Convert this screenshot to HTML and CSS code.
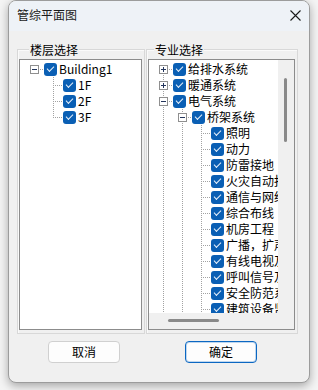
FILE: index.html
```html
<!DOCTYPE html>
<html lang="zh-CN">
<head>
<meta charset="utf-8">
<title>管综平面图</title>
<link rel="stylesheet" href="styles.css">
</head>
<body>
<div class="window">
  <div class="titlebar">
    <span class="title">管综平面图</span>
    <svg class="close" width="11" height="11" viewBox="0 0 11 11"><path d="M0.5 0.5 L10.5 10.5 M10.5 0.5 L0.5 10.5" stroke="#1a1a1a" stroke-width="1.1" fill="none"/></svg>
  </div>
  <div class="content">
    <div class="groups">
      <div class="group group-floor">
        <div class="legend">楼层选择</div>
        <div class="tree">
          <div class="rows">
            <div class="row"><span class="cell lone"><i class="exp"></i></span><span class="cb"></span><span class="label">Building1</span></div>
            <div class="row"><span class="cell"></span><span class="cell tee"></span><span class="cb"></span><span class="label">1F</span></div>
            <div class="row"><span class="cell"></span><span class="cell tee"></span><span class="cb"></span><span class="label">2F</span></div>
            <div class="row"><span class="cell"></span><span class="cell elbow"></span><span class="cb"></span><span class="label">3F</span></div>
          </div>
        </div>
      </div>
      <div class="group group-spec">
        <div class="legend">专业选择</div>
        <div class="tree tree-scroll">
          <div class="rows">
            <div class="row"><span class="cell first"><i class="exp plus"></i></span><span class="cb"></span><span class="label">给排水系统</span></div>
            <div class="row"><span class="cell tee"><i class="exp plus"></i></span><span class="cb"></span><span class="label">暖通系统</span></div>
            <div class="row"><span class="cell tee"><i class="exp"></i></span><span class="cb"></span><span class="label">电气系统</span></div>
            <div class="row"><span class="cell pipe"></span><span class="cell tee"><i class="exp"></i></span><span class="cb"></span><span class="label">桥架系统</span></div>
            <div class="row"><span class="cell pipe"></span><span class="cell pipe"></span><span class="cell tee"></span><span class="cb"></span><span class="label">照明</span></div>
            <div class="row"><span class="cell pipe"></span><span class="cell pipe"></span><span class="cell tee"></span><span class="cb"></span><span class="label">动力</span></div>
            <div class="row"><span class="cell pipe"></span><span class="cell pipe"></span><span class="cell tee"></span><span class="cb"></span><span class="label">防雷接地</span></div>
            <div class="row"><span class="cell pipe"></span><span class="cell pipe"></span><span class="cell tee"></span><span class="cb"></span><span class="label">火灾自动报警系统</span></div>
            <div class="row"><span class="cell pipe"></span><span class="cell pipe"></span><span class="cell tee"></span><span class="cb"></span><span class="label">通信与网络系统</span></div>
            <div class="row"><span class="cell pipe"></span><span class="cell pipe"></span><span class="cell tee"></span><span class="cb"></span><span class="label">综合布线</span></div>
            <div class="row"><span class="cell pipe"></span><span class="cell pipe"></span><span class="cell tee"></span><span class="cb"></span><span class="label">机房工程</span></div>
            <div class="row"><span class="cell pipe"></span><span class="cell pipe"></span><span class="cell tee"></span><span class="cb"></span><span class="label">广播，扩声与会议系统</span></div>
            <div class="row"><span class="cell pipe"></span><span class="cell pipe"></span><span class="cell tee"></span><span class="cb"></span><span class="label">有线电视及卫星电视接收系统</span></div>
            <div class="row"><span class="cell pipe"></span><span class="cell pipe"></span><span class="cell tee"></span><span class="cb"></span><span class="label">呼叫信号及公共信息显示系统</span></div>
            <div class="row"><span class="cell pipe"></span><span class="cell pipe"></span><span class="cell tee"></span><span class="cb"></span><span class="label">安全防范系统</span></div>
            <div class="row"><span class="cell pipe"></span><span class="cell pipe"></span><span class="cell tee"></span><span class="cb"></span><span class="label">建筑设备监控系统</span></div>
            <div class="row"><span class="cell pipe"></span><span class="cell pipe"></span><span class="cell tee"></span><span class="cb"></span><span class="label">应急照明</span></div>
          </div>
          <div class="vscroll"><div class="vthumb"></div></div>
          <div class="hscroll"><div class="hthumb"></div></div>
          <div class="corner"></div>
        </div>
      </div>
    </div>
    <div class="buttons">
      <button class="btn">取消</button>
      <button class="btn btn-primary">确定</button>
    </div>
  </div>
</div>
</body>
</html>
```

FILE: styles.css
```css
* { box-sizing: border-box; }

html, body {
  margin: 0;
  padding: 0;
  background: #f4f4f4;
  width: 318px;
  height: 390px;
  overflow: hidden;
  font-family: "Noto Sans CJK SC", "Microsoft YaHei", sans-serif;
  font-size: 12px;
  color: #000;
}

.window {
  margin-left: 8px;
  width: 302px;
  height: 383px;
  border: 1px solid #9c9c9c;
  border-radius: 8px;
  background: #f0f0f0;
  overflow: hidden;
  display: flex;
  flex-direction: column;
  box-shadow: 0 3px 10px rgba(0, 0, 0, 0.32);
}

.titlebar {
  height: 30px;
  flex: none;
  background: #eef2f7;
  display: flex;
  align-items: center;
  justify-content: space-between;
  padding: 0 8px 2px 8px;
}

.title {
  font-size: 12px;
  line-height: 16px;
  color: #1a1a1a;
}

.close { display: block; }

.content {
  flex: 1;
  padding: 18px 0 0 8px;
  display: flex;
  flex-direction: column;
}

.groups {
  display: flex;
  gap: 1px;
}

.group {
  border: 1px solid #d8d8d8;
  box-shadow: inset 1px 1px 0 #fafafa;
  padding: 0 2px 3px 1px;
  display: flex;
  flex-direction: column;
}

.legend {
  align-self: flex-start;
  margin-top: -8px;
  height: 16px;
  line-height: 16px;
  padding: 0 1px;
  background: #f0f0f0;
  font-size: 12px;
  color: #000;
}

.group-floor .legend { margin-left: 10px; }
.group-spec .legend { margin-left: 6px; }

.tree {
  margin-top: 1px;
  height: 271px;
  border: 1px solid #8c8c8c;
  background: #fff;
  overflow: hidden;
}

.group-floor .tree { width: 123px; }
.group-spec .tree { width: 147px; }

.tree-scroll {
  display: grid;
  grid-template-columns: 129px 16px;
  grid-template-rows: 253px 16px;
}

.rows {
  padding: 1px 0 0 5px;
  overflow: hidden;
  min-width: 0;
}

.row {
  display: flex;
  align-items: center;
  height: 16px;
  white-space: nowrap;
}

.cell {
  --dv: repeating-linear-gradient(to bottom, #a2a2a2 0 1px, transparent 1px 2px);
  --dh: repeating-linear-gradient(to right, #a2a2a2 0 1px, transparent 1px 2px);
  flex: none;
  width: 19px;
  height: 16px;
  display: flex;
  align-items: center;
  background-repeat: no-repeat;
}

.pipe {
  background-image: var(--dv);
  background-position: 9px 0;
  background-size: 1px 16px;
}

.tee {
  background-image: var(--dh), var(--dv);
  background-position: 9px 8px, 9px 0;
  background-size: 10px 1px, 1px 16px;
}

.elbow {
  background-image: var(--dh), var(--dv);
  background-position: 9px 8px, 9px 0;
  background-size: 10px 1px, 1px 8px;
}

.first {
  background-image: var(--dh), var(--dv);
  background-position: 9px 8px, 9px 8px;
  background-size: 10px 1px, 1px 8px;
}

.lone {
  background-image: var(--dh);
  background-position: 9px 8px;
  background-size: 10px 1px;
}

.exp {
  display: block;
  width: 9px;
  height: 9px;
  margin: 1px 0 0 5px;
  border: 1px solid #8f8f8f;
  background-color: #fff;
  background-image: linear-gradient(#23355c, #23355c);
  background-repeat: no-repeat;
  background-position: 1px 3px;
  background-size: 5px 1px;
}

.exp.plus {
  background-image: linear-gradient(#23355c, #23355c), linear-gradient(#23355c, #23355c);
  background-position: 1px 3px, 3px 1px;
  background-size: 5px 1px, 1px 5px;
}

.cb {
  flex: none;
  width: 13px;
  height: 13px;
  border-radius: 3px;
  background: #0a5fb4;
  display: flex;
  align-items: center;
  justify-content: center;
}

.cb::after {
  content: "";
  display: block;
  width: 6px;
  height: 3px;
  border-left: 1.2px solid #e8f1fb;
  border-bottom: 1.2px solid #e8f1fb;
  transform: translateY(-1px) rotate(-45deg);
}

.label {
  margin-left: 2px;
  font-size: 12px;
  line-height: 16px;
  color: #000;
}

.vscroll {
  background: #f0f0f0;
  padding: 18px 0 0 6px;
}

.vthumb {
  width: 3px;
  height: 64px;
  border-radius: 2px;
  background: #8a8a8a;
}

.hscroll {
  background: #f0f0f0;
  padding: 6px 0 0 19px;
}

.hthumb {
  width: 51px;
  height: 3px;
  border-radius: 2px;
  background: #8a8a8a;
}

.corner { background: #f0f0f0; }

.buttons {
  display: flex;
  gap: 65px;
  padding-left: 31px;
  margin-top: 7px;
}

.btn {
  width: 72px;
  height: 22px;
  padding: 0;
  border: 1px solid #d0d0d0;
  border-radius: 4px;
  background: #fdfdfd;
  font-family: "Noto Sans CJK SC", "Microsoft YaHei", sans-serif;
  font-size: 12px;
  line-height: 18px;
  color: #000;
}

.btn-primary {
  border-color: #0b67c2;
  box-shadow: inset 0 0 0 1px rgba(11, 103, 194, 0.25);
}
```
